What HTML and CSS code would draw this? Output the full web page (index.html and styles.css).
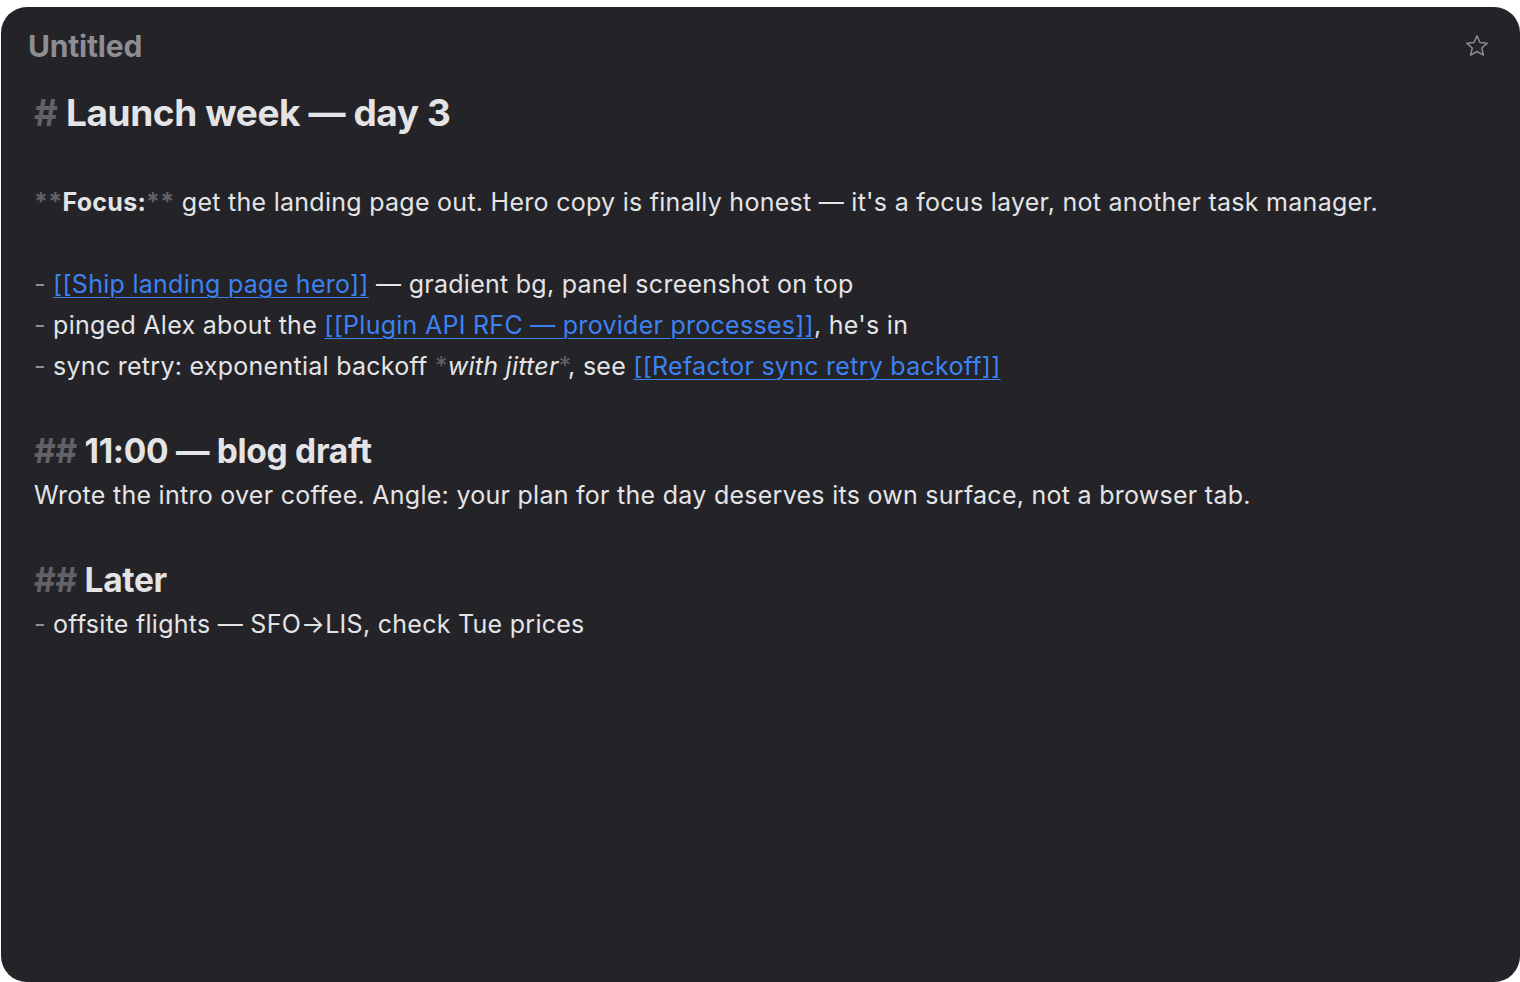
FILE: index.html
```html
<!DOCTYPE html>
<html lang="en">

<head>
    <meta charset="utf-8" />
    <title>Untitled</title>
    <link rel="stylesheet" href="styles.css">
</head>

<body>
    <div class="panel">
        <div class="topbar">
            <span class="doc-title">Untitled</span>
            <svg class="star" width="26" height="26" viewBox="0 0 24 24">
                <path d="M12 2.6l2.75 6.15 6.7.65-5.05 4.45 1.5 6.6L12 17.05l-5.9 3.4 1.5-6.6-5.05-4.45 6.7-.65z"
                    fill="none" stroke="#8a8a90" stroke-width="1.4" stroke-linejoin="round" />
            </svg>
        </div>
        <div class="editor">
            <div class="h1"><span class="mk">#</span> Launch week — day 3</div>
            <div class="blank"></div>
            <div class="line"><b><span class="mk">**</span>Focus:<span class="mk">**</span></b> get the landing page out. Hero copy is finally honest — it's a focus layer, not another task manager.</div>
            <div class="blank"></div>
            <div class="line"><span class="dash">-</span> <a href="#">[[Ship landing page hero]]</a> — gradient bg, panel screenshot on top</div>
            <div class="line"><span class="dash">-</span> pinged Alex about the <a href="#">[[Plugin API RFC — provider processes]]</a>, he's in</div>
            <div class="line"><span class="dash">-</span> sync retry: exponential backoff <span class="mk">*</span><i>with jitter</i><span class="mk">*</span>, see <a href="#">[[Refactor sync retry backoff]]</a></div>
            <div class="blank"></div>
            <div class="h2"><span class="mk">##</span> 11:00 — blog draft</div>
            <div class="line">Wrote the intro over coffee. Angle: your plan for the day deserves its own surface, not a browser tab.</div>
            <div class="blank"></div>
            <div class="h2"><span class="mk">##</span> Later</div>
            <div class="line"><span class="dash">-</span> offsite flights — SFO→LIS, check Tue prices</div>
        </div>
    </div>
</body>

</html>
```

FILE: styles.css
```css
html,
body {
    margin: 0;
    height: 100%;
}

body {
    background-color: white;
    font-family: Inter, "Noto Sans", sans-serif;
    padding: 7px 0 0 0;
    box-sizing: border-box;
}

.panel {
    background-color: #232328;
    border-radius: 26px;
    height: 975px;
    margin: 0 0 0 1px;
    box-sizing: border-box;
    padding: 22px 30px 0 27px;
    color: #e4e4e6;
}

.topbar {
    display: flex;
    justify-content: space-between;
    align-items: center;
    height: 34px;
}

.doc-title {
    font-size: 30px;
    font-weight: 700;
    color: #8d8d92;
    letter-spacing: -0.2px;
}

.editor {
    padding: 22px 0 0 6px;
}

.line,
.blank {
    font-size: 25px;
    letter-spacing: 0.27px;
    line-height: 41px;
    height: 41px;
    white-space: nowrap;
}

.h1 {
    font-size: 37px;
    font-weight: 700;
    line-height: 56px;
    letter-spacing: -0.4px;
}

.h2 {
    font-size: 33.5px;
    font-weight: 700;
    line-height: 47px;
    letter-spacing: -0.3px;
}

.mk {
    color: #616167;
}

.dash {
    color: #909096;
}

b {
    font-weight: 700;
}

a {
    color: #3d82f2;
    text-decoration: underline;
    text-decoration-thickness: 1px;
    text-underline-offset: 4px;
}
```
